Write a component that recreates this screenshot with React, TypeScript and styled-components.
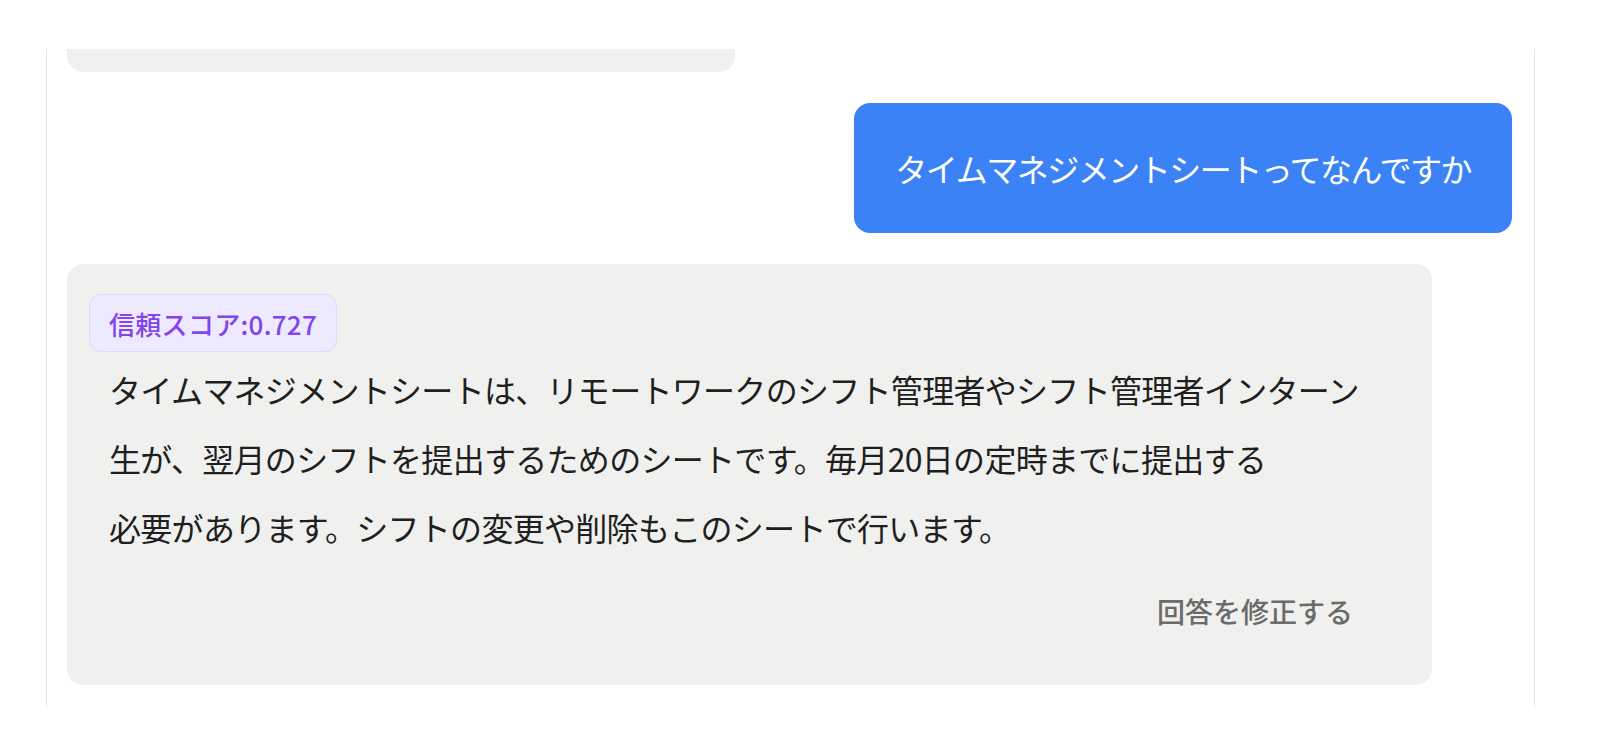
import React from "react";
import styled, { createGlobalStyle } from "styled-components";

const GlobalStyle = createGlobalStyle`
  html, body {
    margin: 0;
    padding: 0;
    background: #ffffff;
  }
  body {
    font-family: "Noto Sans CJK JP", "Noto Sans", sans-serif;
    color: #1f1f1f;
  }
`;

const Page = styled.div`
  padding: 49px 0 0 46px;
`;

const ChatPanel = styled.section`
  width: 1489px;
  height: 658px;
  box-sizing: border-box;
  border-left: 1px solid #e2e2e2;
  border-right: 1px solid #e2e2e2;
  overflow: hidden;
`;

const MessageList = styled.div`
  display: flex;
  flex-direction: column;
  gap: 31px;
  padding: 0 22px 21px 20px;
`;

const ClippedBubble = styled.div`
  width: 668px;
  height: 23px;
  background: #f0f0ee;
  border-radius: 0 0 16px 16px;
`;

const UserBubble = styled.div`
  align-self: flex-end;
  background: #3b82f6;
  color: #ffffff;
  border-radius: 16px;
  padding: 41px 41px;
  font-size: 32px;
  line-height: 48px;
  letter-spacing: -1.5px;
  white-space: nowrap;
`;

const AnswerBubble = styled.div`
  width: 1365px;
  box-sizing: border-box;
  background: #f0f0ee;
  border-radius: 16px;
  padding: 30px 22px 48px 22px;
  display: flex;
  flex-direction: column;
`;

const ScoreBadge = styled.span`
  align-self: flex-start;
  box-sizing: border-box;
  height: 58px;
  padding: 0 19px;
  display: inline-flex;
  align-items: center;
  background: #ede9fe;
  border: 1.5px solid #ddd6fe;
  border-radius: 12px;
  color: #8344ec;
  font-size: 26px;
  font-weight: 500;
  letter-spacing: 0.3px;
`;

const AnswerText = styled.p`
  margin: 3px 0 0 0;
  padding: 0 20px;
  font-size: 32px;
  line-height: 69px;
  letter-spacing: -0.7px;
  color: #1f1f1f;
`;

const AnswerFooter = styled.div`
  display: flex;
  justify-content: flex-end;
  margin-top: 23px;
  padding-right: 37px;
`;

const EditButton = styled.button`
  font-family: "Noto Sans CJK JP", "Noto Sans", sans-serif;
  background: transparent;
  border: none;
  padding: 8px 20px;
  font-size: 28px;
  line-height: 36px;
  font-weight: 500;
  color: #6b6b6b;
  cursor: pointer;
`;

export default function App() {
  return (
    <>
      <GlobalStyle />
      <Page>
        <ChatPanel>
          <MessageList>
            <ClippedBubble />
            <UserBubble>タイムマネジメントシートってなんですか</UserBubble>
            <AnswerBubble>
              <ScoreBadge>信頼スコア:0.727</ScoreBadge>
              <AnswerText>
                タイムマネジメントシートは、リモートワークのシフト管理者やシフト管理者インターン
                <br />
                生が、翌月のシフトを提出するためのシートです。毎月20日の定時までに提出する
                <br />
                必要があります。シフトの変更や削除もこのシートで行います。
              </AnswerText>
              <AnswerFooter>
                <EditButton>回答を修正する</EditButton>
              </AnswerFooter>
            </AnswerBubble>
          </MessageList>
        </ChatPanel>
      </Page>
    </>
  );
}
